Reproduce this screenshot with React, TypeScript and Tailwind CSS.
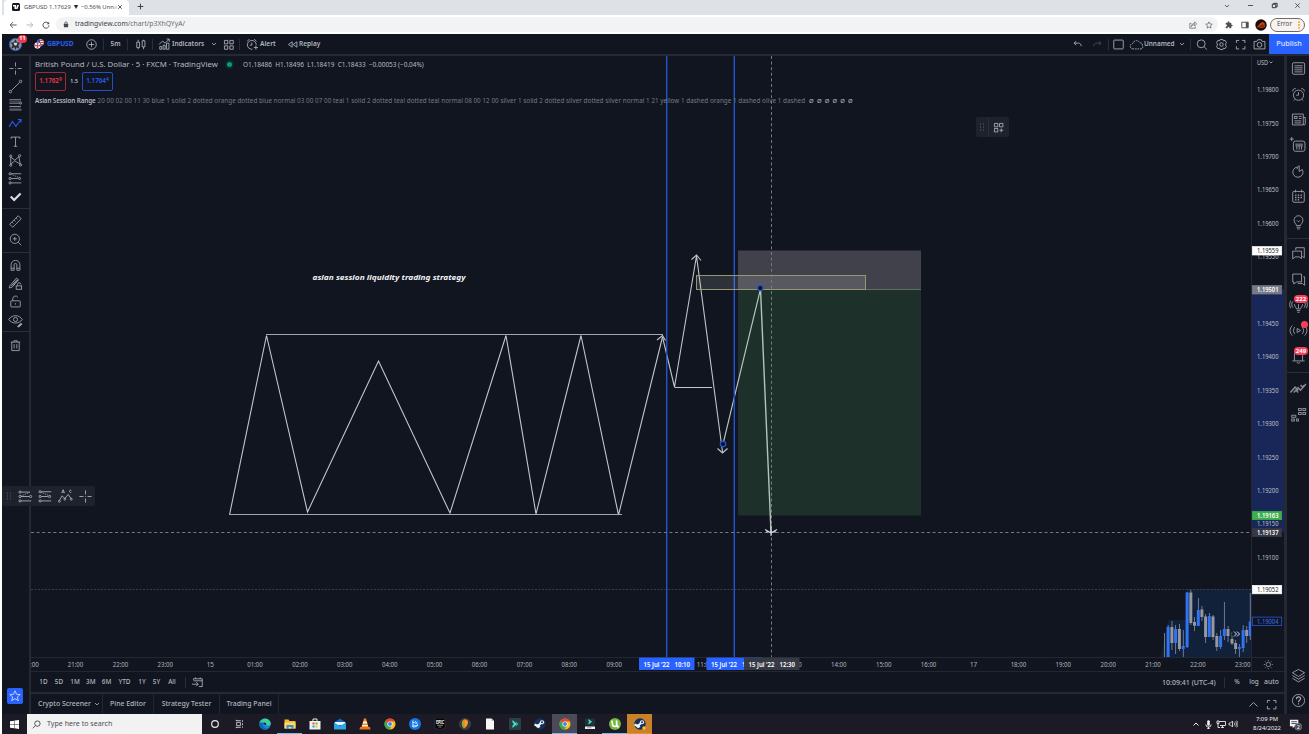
import React from "react";

type P = { children?: React.ReactNode; className?: string };

const Ico = ({ children, className = "" }: P) => (
  <svg
    viewBox="0 0 28 28"
    className={`h-[19px] w-[19px] shrink-0 ${className}`}
    fill="none"
    stroke="currentColor"
    strokeWidth="1.25"
  >
    {children}
  </svg>
);

const Cell = ({ children, className = "" }: P) => (
  <div className={`flex h-full shrink-0 items-center justify-center ${className}`}>{children}</div>
);

const VSep = () => <div className="h-[11px] w-px shrink-0 bg-[#2a2e39]" />;
const HSep = () => <div className="h-px w-full shrink-0 bg-[#2a2e39]" />;

const Chevron = () => (
  <svg viewBox="0 0 6 4" className="h-[4px] w-[6px] shrink-0" fill="none" stroke="currentColor" strokeWidth="0.8">
    <path d="M1 1l2 2 2-2" />
  </svg>
);

const expandIcon = <path d="M8 11.500V8h4M16.500 8H20.500v4M20.500 16.500v4h-4M12 20.500H8v-4" />;

function BrowserTabs() {
  return (
    <div className="flex h-[15px] shrink-0 items-center bg-[#dee1e6] text-[6px] text-[#4a4d51]">
      <div className="ml-[2px] flex h-full w-[125px] items-center rounded-t-[4px] bg-white pl-[8px]">
        <svg viewBox="0 0 16 16" className="mb-[1px] h-[8px] w-[8px] shrink-0">
          <rect width="16" height="16" rx="3" fill="#131722" />
          <path d="M2 4h6v8H5V7H2zM10 4h4l-3 8H8z" fill="#fff" />
        </svg>
        <span className="mb-[2px] ml-[4px] w-[90px] whitespace-nowrap text-[5.900px] leading-[10px]">
          GBPUSD 1.17629 <span className="text-[7px] leading-none text-[#222]">▼</span> −0.56% Unn<span className="text-[#c5c7ca]">a</span>
        </span>
        <svg viewBox="0 0 10 10" className="mb-[1px] ml-[3px] h-[6px] w-[6px] shrink-0" stroke="#3c4043" strokeWidth="1.400">
          <path d="M2 2l6 6M8 2l-6 6" />
        </svg>
      </div>
      <svg viewBox="0 0 10 10" className="mb-[2px] ml-[8px] h-[7px] w-[7px]" stroke="#3c4043" strokeWidth="1.400">
        <path d="M5 1v8M1 5h8" />
      </svg>
      <div className="ml-auto mb-[4px] flex h-[10px] items-center text-[#3c4043]">
        <Cell className="w-[24px]"><Chevron /></Cell>
        <Cell className="w-[23px]"><div className="h-px w-[5px] bg-[#55585c]" /></Cell>
        <Cell className="w-[24px]">
          <svg viewBox="0 0 8 8" className="h-[7px] w-[7px]" fill="none" stroke="#222" strokeWidth="1">
            <path d="M1.500 2.500h4v4h-4zM3 2.500v-1h4v4H5.500" />
          </svg>
        </Cell>
        <Cell className="w-[23px]">
          <svg viewBox="0 0 8 8" className="h-[7px] w-[7px]" stroke="#333" strokeWidth=".9"><path d="M1.500 1.500l5 5M6.500 1.500l-5 5" /></svg>
        </Cell>
      </div>
    </div>
  );
}

function AddressBar() {
  return (
    <div className="flex h-[19px] shrink-0 items-center bg-white text-[#55585c]">
      <Cell className="w-[21px] justify-center">
        <svg viewBox="0 0 10 10" className="h-[8px] w-[8px]" fill="none" stroke="#46494d" strokeWidth="1.100"><path d="M9.500 5h-8M5 1.500L1.500 5 5 8.500" /></svg>
      </Cell>
      <Cell className="w-[13px]">
        <svg viewBox="0 0 10 10" className="h-[8px] w-[8px]" fill="none" stroke="#aeb0b4" strokeWidth="1.100"><path d="M.5 5h8M5 1.500L8.500 5 5 8.500" /></svg>
      </Cell>
      <Cell className="w-[20px]">
        <svg viewBox="0 0 10 10" className="h-[8px] w-[8px]" fill="none" stroke="#46494d" strokeWidth="1.200"><path d="M8.300 3.300A3.800 3.800 0 1 0 8.800 5.500" /><path d="M9 .8v3.200H5.800z" fill="#46494d" stroke="none" /></svg>
      </Cell>
      <div className="flex h-[15px] w-[1162px] items-center rounded-full bg-[#f1f3f4] pl-[7px] pr-[1px]">
        <svg viewBox="0 0 8 10" className="h-[7px] w-[6px]"><rect x="1" y="4" width="6" height="5" rx=".6" fill="#46494d" /><path d="M2.300 4.500V3a1.700 1.700 0 0 1 3.400 0v1.500" fill="none" stroke="#46494d" /></svg>
        <span className="ml-[6px] text-[6.800px] text-[#3c4043]">
          tradingview.com<span className="text-[#6b6e73]">/chart/p3XhQYyA/</span>
        </span>
        <div className="ml-auto flex items-center">
          <Cell className="w-[17px]">
            <svg viewBox="0 0 10 10" className="h-[8px] w-[8px]" fill="none" stroke="#5f6368" strokeWidth=".9"><path d="M3 3H1v6h7V7M3 7c0-3 2-4 4-4V1l2.500 2.700L7 6.200V4.500C5 4.500 4 5.500 3 7z" /></svg>
          </Cell>
          <Cell className="w-[16px]">
            <svg viewBox="0 0 10 10" className="h-[8px] w-[8px]" fill="none" stroke="#5f6368" strokeWidth=".9"><path d="M5 1l1.200 2.700 2.900.3-2.200 2 .6 2.900L5 7.400 2.500 8.900l.6-2.900-2.200-2 2.900-.3z" /></svg>
          </Cell>
        </div>
      </div>
      <Cell className="ml-[3px] w-[15px]">
        <svg viewBox="0 0 24 24" className="h-[8px] w-[8px]" fill="#4d5054"><path d="M20.500 11H19V7a2 2 0 0 0-2-2h-4V3.500a2.500 2.500 0 0 0-5 0V5H4a2 2 0 0 0-2 2v3.800h1.500a2.700 2.700 0 0 1 0 5.400H2V20a2 2 0 0 0 2 2h3.800v-1.500a2.700 2.700 0 0 1 5.400 0V22H17a2 2 0 0 0 2-2v-4h1.500a2.500 2.500 0 0 0 0-5z" /></svg>
      </Cell>
      <Cell className="w-[17px]">
        <svg viewBox="0 0 10 10" className="h-[8px] w-[8px]"><path d="M1 1.500h8v7H1z" fill="none" stroke="#4d5054" strokeWidth="1.200" /><path d="M6 1.500h3v7H6z" fill="#4d5054" /></svg>
      </Cell>
      <Cell className="w-[16px]">
        <svg viewBox="0 0 12 12" className="h-[12px] w-[12px]"><circle cx="6" cy="6" r="5.700" fill="#1c0d09" /><path d="M1.500 8c2-1 3-4 6-5l2 1 .5 4-3 1z" fill="#c8431a" /><path d="M3 8l5-3 1 3z" fill="#7c2410" /></svg>
      </Cell>
      <div className="ml-[1px] flex h-[14px] w-[35px] shrink-0 items-center justify-center rounded-full border border-[#6f6a6a] bg-[#f8f3f0] text-[6.300px] text-[#4a4d51]">
        <span className="ml-[2px]">Error</span>
        <svg viewBox="0 0 2 8" className="ml-[6px] h-[8px] w-[2px]" fill="#f29900"><circle cx="1" cy="1.200" r=".9" /><circle cx="1" cy="4" r=".9" /><circle cx="1" cy="6.800" r=".9" /></svg>
      </div>
    </div>
  );
}

function TopToolbar() {
  return (
    <div className="flex h-[20px] shrink-0 items-center bg-[#11151f] text-[6.600px] text-[#b2b5be]">
      <Cell className="relative w-[28px]">
        <svg viewBox="0 0 16 16" className="mr-[2px] h-[15px] w-[15px]">
          <circle cx="8" cy="8" r="6.600" fill="#8b8f96" stroke="#2450d8" strokeWidth="1" />
          <path d="M8 2.500l1.500 3 3.500.5-2 2.500 1 4-3-1.500L8 14l-1-3-3.500 1.200L5 8.500 3 6l3.500-.5z" fill="#2a2d35" />
          <path d="M6 6h4l-1 3H7z" fill="#d8dade" />
        </svg>
        <span className="absolute left-[16px] top-[1px] flex h-[8px] w-[9px] items-center justify-center rounded-full bg-[#f23645] text-[5.500px] font-bold text-white">11</span>
      </Cell>
      <Cell className="w-[17px]">
        <svg viewBox="0 0 20 20" className="h-[10px] w-[10px]">
          <clipPath id="fl1"><circle cx="13" cy="7" r="6.500" /></clipPath>
          <g clipPath="url(#fl1)"><rect width="20" height="20" fill="#e9eef8" /><path d="M6 2h14v2H6zM6 6h14v2H6zM6 10h14v2H6z" fill="#e0414e" /><path d="M6 0h6v7H6z" fill="#2459c9" /></g>
          <circle cx="7" cy="13" r="7" fill="#11151f" />
          <clipPath id="fl2"><circle cx="7" cy="13" r="6.300" /></clipPath>
          <g clipPath="url(#fl2)"><rect y="6" width="14" height="14" fill="#2f6be0" /><path d="M0 6l14 14M14 6L0 20" stroke="#fff" strokeWidth="2.500" /><path d="M7 6v14M0 13h14" stroke="#fff" strokeWidth="4.500" /><path d="M7 6v14M0 13h14" stroke="#e0414e" strokeWidth="2.500" /></g>
        </svg>
      </Cell>
      <span className="w-[34px] shrink-0 text-[6.700px] font-bold tracking-[-0.1px] text-[#2a5cf5]">GBPUSD</span>
      <Cell className="w-[20px]"><Ico><circle cx="14" cy="14" r="7" /><path d="M14 10v8M10 14h8" /></Ico></Cell>
      <Cell className="ml-[2px]"><VSep /></Cell>
      <Cell className="w-[23px] font-semibold">5m</Cell>
      <VSep />
      <Cell className="w-[24px]"><Ico><path d="M8.500 10.500h4v8h-4zM10.500 10.500V7M10.500 18.500V21M16.500 8.500h4v9h-4zM18.500 17.500v3.500M18.500 8.500V7" /></Ico></Cell>
      <VSep />
      <Cell className="ml-[2px] w-[19px]"><Ico><path d="M7 21v-4h3v4zM12 21v-6h3v6zM17 21v-9h3.500v9zM6 14l5-5 4 3 6-6M17 6h4v4" /></Ico></Cell>
      <span className="ml-[-2px] w-[33px] shrink-0 text-[6.500px] font-semibold">Indicators</span>
      <Cell className="ml-[3px] w-[12px]"><Chevron /></Cell>
      <Cell className="ml-[-1px] w-[19px]"><Ico><path d="M8 8h5v5H8zM16 8h5v5h-5zM8 16h5v5H8zM16 16h5v5h-5z" /></Ico></Cell>
      <Cell className="ml-[1px]"><VSep /></Cell>
      <Cell className="ml-[3px] w-[19px]"><Ico><circle cx="13" cy="14.500" r="6.500" strokeDasharray="31 10" strokeDashoffset="-9" /><path d="M13 11v4h-3M6 9.500L9.500 6M16.500 6l3.500 3.500M19 15.500v6M16 18.500h6" /></Ico></Cell>
      <span className="ml-[-2px] w-[24px] shrink-0 font-semibold">Alert</span>
      <Cell className="ml-[1px] w-[14px]"><Ico><path d="M13.500 10v8L8 14zM20.500 10v8L15 14z" strokeLinejoin="round" /></Ico></Cell>
      <span className="shrink-0 text-[6.500px] font-semibold">Replay</span>
      <div className="ml-auto flex h-full items-center">
        <Cell className="w-[19px]"><Ico><path d="M12 9l-3 3 3 3M9 12h6c3 0 4.500 1.500 4.500 4.500" /></Ico></Cell>
        <Cell className="w-[20px] text-[#4a4e59]"><Ico><path d="M16 9l3 3-3 3M19 12h-6c-3 0-4.500 1.500-4.500 4.500" /></Ico></Cell>
        <Cell className="ml-[1px]"><VSep /></Cell>
        <Cell className="w-[19px]"><Ico><rect x="7" y="7.500" width="14" height="13" rx="1" /></Ico></Cell>
        <Cell className="w-[16px]">
          <Ico><path strokeDasharray="2.500 1.200" d="M9 20.500a4 4 0 0 1-.5-8c1-4.500 8-6 10.500-1 3.500 0 4.500 3 3.500 4.500 1.500 2 .500 4.500-2.500 4.500z" /></Ico>
        </Cell>
        <span className="w-[32px] shrink-0 text-[6.400px] font-semibold">Unnamed</span>
        <Cell className="w-[12px]"><Chevron /></Cell>
        <Cell className="ml-[2px]"><VSep /></Cell>
        <Cell className="ml-[1px] w-[19px]"><Ico><circle cx="13.500" cy="13" r="5.800" /><path d="M18 17.500l4 4" /></Ico></Cell>
        <Cell className="w-[20px]"><Ico><circle cx="14" cy="14" r="2.600" /><path d="M12 6.500h4l.8 2.200 2.400-.9 2 3-1 2v2.400l1 2-2 3-2.400-.9L16 21.500h-4l-.8-2.200-2.400.9-2-3 1-2v-2.400l-1-2 2-3 2.400.9z" strokeLinejoin="round" /></Ico></Cell>
        <Cell className="w-[19px]"><Ico>{expandIcon}</Ico></Cell>
        <Cell className="w-[19px]"><Ico><path d="M6 9.500H10L11.500 7h5l1.500 2.500h4v11H6z" strokeLinejoin="round" /><circle cx="14" cy="14.500" r="3.500" /></Ico></Cell>
        <div className="flex h-full w-[40px] items-center justify-center bg-[#2962ff] text-[7.300px] font-medium text-[#dde6ff]">Publish</div>
      </div>
    </div>
  );
}

const fibTool = (
  <g><path d="M7.500 7h15M7.500 14h10M7.500 20.500h15" /><path d="M8 8l12 5" strokeDasharray="1.500 1.500" /><circle cx="6" cy="7" r="1.600" /><circle cx="6" cy="14" r="1.600" /><circle cx="6" cy="20.500" r="1.600" /><circle cx="20" cy="14" r="1.600" /></g>
);
const crossTool = <path d="M14 5v6M14 17v6M5 14h6M17 14h6M13.500 14h1" />;

const leftIcons: React.ReactNode[] = [
  crossTool,
  <g><path d="M8 20L20 8" /><circle cx="6.500" cy="21.500" r="1.800" /><circle cx="21.500" cy="6.500" r="1.800" /></g>,
  <g><path d="M5 7h17M5 12h15M5 17h17M5 22h18" /><circle cx="21.500" cy="12" r="1.500" /><path d="M5 9.500h17M5 19.500h17" opacity=".4" /></g>,
  <path d="M4.500 19l5-8 5 7 7-9M17.500 8H22v4.500M14 18l1.500 1" strokeWidth="1.600" />,
  <path d="M7.500 10V7.500h13V10M14 7.500v13.500M11.500 21h5" />,
  <g><path d="M7 19.500V9l6 4.500 6-5 2 11-8-5z" /><circle cx="7" cy="21" r="1.600" /><circle cx="7" cy="7.500" r="1.600" /><circle cx="20" cy="7" r="1.600" /><circle cx="21.500" cy="20.500" r="1.600" /></g>,
  fibTool,
  <path d="M7 14l5 5 9.500-9.500" stroke="#dcdee3" strokeWidth="3.200" />,
];
const measure: React.ReactNode[] = [
  <path d="M5.500 18L18 5.500l4.500 4.500L10 22.500zM9 15l2 2M12 12l2 2M15 9l2 2" />,
  <g><circle cx="13" cy="13" r="6.800" /><path d="M18 18l4.500 4.500M13 10v6M10 13h6" /></g>,
];
const locks: React.ReactNode[] = [
  <path d="M7.500 21V13a6.500 6.500 0 0 1 13 0v8h-4.500v-8a2 2 0 0 0-4 0v8zM7.500 18h4.500M16 18h4.500" />,
  <g><path d="M5 18L15.500 6l3 2.500L9 19.500 5 20.500zM7.500 18l9-10M10.500 17l7-8M17 17V15.500a2.500 2.500 0 0 1 5 0" /><rect x="15" y="17.500" width="8" height="5" /></g>,
  <g><rect x="7" y="13" width="14" height="9" rx="1" /><path d="M10 13v-3a4 4 0 0 1 7.500-2M14 16.500v2" /></g>,
  <g><path d="M4 12.500c5-7.500 15-7.500 20 0-5 7-15 7-20 0z" /><circle cx="14" cy="12.500" r="3" /><path d="M17 23l5-5 1.500 1.500-4.500 4z" fill="currentColor" /></g>,
];

function LeftToolbar() {
  const Box = ({ children, className = "" }: P) => (
    <div className={`flex shrink-0 items-center justify-center ${className}`}>{children}</div>
  );
  return (
    <div className="flex w-[27px] shrink-0 flex-col bg-[#11151f] pt-[3px] text-[#a6a9b2]">
      {leftIcons.map((d, i) => (
        <Box key={i} className={i === 3 ? "h-[18.400px] text-[#2a5cf5]" : "h-[18.400px]"}><Ico>{d}</Ico></Box>
      ))}
      <div className="mt-[2px]"><HSep /></div>
      <div className="pt-[3px]">{measure.map((d, i) => <Box key={i} className="h-[18.400px]"><Ico>{d}</Ico></Box>)}</div>
      <div className="mt-[3px]"><HSep /></div>
      <div className="pt-[3px]">{locks.map((d, i) => <Box key={i} className="h-[18.400px]"><Ico>{d}</Ico></Box>)}</div>
      <div className="mt-[2px]"><HSep /></div>
      <Box className="mt-[4px] h-[18px]"><Ico><path d="M7 9h14M11.500 9V7h5v2M8.500 9v12.500h11V9M12 12v6.500M16 12v6.500" /></Ico></Box>
      <div className="mb-[10px] ml-[5px] mt-auto flex h-[16px] w-[16px] items-center justify-center rounded-[2px] bg-[#2962ff] text-[#cfdcff]">
        <svg viewBox="0 0 16 16" className="h-[14px] w-[14px]" fill="none" stroke="currentColor"><path d="M8 2l1.700 4 4.300.3-3.300 2.800 1.100 4.200L8 11l-3.800 2.300 1.100-4.200L2 6.300 6.300 6z" /></svg>
      </div>
    </div>
  );
}

const rightTop: React.ReactNode[] = [
  <g><rect x="5" y="5.500" width="18" height="17" rx="2" /><path d="M8 10h12M8 13h12M8 16h12M8 19h12" /></g>,
  <g><circle cx="14" cy="15" r="7.500" /><path d="M14 10.500V15h-3.500M5.500 9.500a3.500 3.500 0 0 1 4.500-4M22.500 9.500a3.500 3.500 0 0 0-4.500-4M9 21l-2 2M19 21l2 2" /></g>,
  <g><path d="M5 6h16v16H5zM21 11h3v9.500c0 2-3 2-3 0M8 16h10M8 19h10M14.500 9.500h4M14.500 12.500h4M8 9.500h4v3H8z" /></g>,
  <g><rect x="6.500" y="7.500" width="17" height="15" rx="3" /><path d="M9.500 12h11M9.500 14.500h11M11.500 15v5M15 15v5M18.500 15v5" /><path d="M4 1.500v6M1 4.500h6" stroke="#11151f" strokeWidth="4" /><path d="M4 1.500v6M1 4.500h6" /></g>,
  <path d="M12 7.500A7.500 7.500 0 1 0 19.500 11l-4.500 3V5.500c-1.500.5-3 2-3 5" />,
  <g><rect x="5.500" y="6.500" width="17" height="16" rx="2" /><path d="M9.500 4v4M18.500 4v4" /><path d="M9 12h10M9 15.500h10M9 19h8" strokeDasharray="2 2" strokeWidth="2" /></g>,
  <path d="M11 18.500c0-2.500-3.500-3.500-3.500-8a6.500 6.500 0 0 1 13 0c0 4.500-3.500 5.500-3.500 8zM11 21h6M12 23.500h4M12 11l2 2 2-2" />,
];
const rightMid: React.ReactNode[] = [
  <path d="M10 9V5.500h12.500v15l-3-2.500M5.500 10.500h13v11l-3.500-2.500H9L5.500 22z" strokeLinejoin="round" />,
  <path d="M5.500 6h13v11.500h-7l-4.500 3v-3H5.500zM21 10h2v12.500l-3-2.500h-7" strokeLinejoin="round" />,
  <path d="M11 19c0-2-3-3-3-7M20 12c0 4-3 5-3 7h-6M11.500 21.500h5M12.500 24h3M5.500 8c-2 3-2 6 0 9M2.500 7c-2 3-2 8 0 11M22.500 8c2 3 2 6 0 9M25.500 7c2 3 2 8 0 11M14 12v6" />,
  <path d="M12 11v6l5-3zM8.500 9c-2.500 3-2.500 7 0 10M5 6.500c-4.500 4.500-4.500 10.500 0 15M19.500 9c2.500 3 2.500 7 0 10M23 6.500c4.500 4.500 4.500 10.500 0 15" />,
  <path d="M5 20.500h18M8 20v-8a6 6 0 0 1 12 0v8M12 22.500c0 2 4 2 4 0" />,
];
const badges = ["", "", "222", "•", "249"];
const rightLow: React.ReactNode[] = [
  <path d="M2 20l7-8 4.500 4.500M7 20l3-3.500M12.500 12l4.500 4.500 8-9M17 9l3 3 2-2.500M13.500 20l-4-4.500" strokeWidth="2.200" stroke="#868993" />,
  <path d="M14 5h4v3h-4zM20.500 5h4v3h-4zM14 11h4v3h-4zM20.500 11h4v3h-4zM4 15h6v3H4zM4 20.500h4v3H4zM11 20.500h3v3h-3z" strokeWidth="1.500" stroke="#868993" />,
];

function RightBar() {
  return (
    <div className="flex w-[22px] shrink-0 flex-col bg-[#11151f] text-[#a6a9b2]">
      {rightTop.map((d, i) => (
        <div key={i} className="flex h-[25.600px] shrink-0 items-center justify-center"><Ico>{d}</Ico></div>
      ))}
      <div className="mt-[3px]"><HSep /></div>
      <div className="pt-[2px]">
        {rightMid.map((d, i) => (
          <div key={i} className="relative flex h-[25.600px] items-center justify-center">
            <Ico>{d}</Ico>
            {badges[i] === "•" ? (
              <span className="absolute right-[1px] top-[3px] h-[7px] w-[7px] rounded-full bg-[#f7405c]" />
            ) : badges[i] ? (
              <span className="absolute right-[1px] top-[3px] flex h-[8px] w-[14px] items-center justify-center rounded-full bg-[#f7405c] text-[6px] font-bold text-white">{badges[i]}</span>
            ) : null}
          </div>
        ))}
      </div>
      <div className="mt-[3px]"><HSep /></div>
      <div className="pt-[3px]">
        {rightLow.map((d, i) => (
          <div key={i} className="flex h-[25.600px] items-center justify-center"><Ico>{d}</Ico></div>
        ))}
      </div>
      <div className="mt-auto flex h-[26px] items-center justify-center">
        <Ico><path d="M5 10l9-5 9 5-9 5.500zM5 14l9 5.500 9-5.500M5 18l9 5.500 9-5.500" strokeLinejoin="round" /></Ico>
      </div>
      <div className="mb-[1px] flex h-[25px] items-center justify-center">
        <Ico><circle cx="14" cy="14" r="9" /><path d="M11 12c0-4.500 6-4 6-.5 0 2.500-3 2-3 5M14 18v2" strokeWidth="1.700" /></Ico>
      </div>
    </div>
  );
}

// x, wick top, wick bottom, body top, body bottom, rising
const candles: [number, number, number, number, number, boolean][] = [
  [1164.5, 633, 657, 645, 645, false],
  [1168.1, 625, 657, 627, 657, true],
  [1171.9, 621, 650, 627, 643, false],
  [1175.6, 625, 654, 629, 643, true],
  [1179.4, 624, 651, 629, 649, false],
  [1183.2, 630, 657, 646, 649, true],
  [1187.1, 592, 648, 592.5, 647, true],
  [1190.8, 590, 625, 592.5, 623, false],
  [1194.5, 617, 631, 622, 625.7, false],
  [1198.3, 598, 626, 610, 626, true],
  [1201.9, 606, 621, 609.5, 617, false],
  [1205.6, 614, 643, 616.5, 637, false],
  [1209.3, 613, 637, 616, 637, true],
  [1213, 615, 640, 616.5, 637, false],
  [1216.8, 633, 651, 636, 647, false],
  [1220.6, 630, 649, 636, 647, true],
  [1224.3, 602, 640, 629, 636, true],
  [1228, 626, 642, 629, 636, false],
  [1232, 632, 645, 639, 643.5, false],
  [1235.6, 640, 654, 643, 649, false],
  [1239.3, 644, 657, 647, 649, true],
  [1243.1, 625, 652, 630, 648, true],
  [1246.7, 626, 643, 630, 636, false],
  [1250.2, 593, 640, 621.5, 636, true],
];

function Chart() {
  return (
    <svg viewBox="31 56 1220 601" className="block h-[601px] w-[1220px]" fill="none" stroke="#c3c5ca" strokeWidth="1.100">
      <path d="M1161 657L1168 620H1187V589H1251V657z" fill="#12213a" stroke="none" />
      <path d="M31 589.500H1251" stroke="#3c3f49" strokeWidth="1" strokeDasharray="2 1.500" />
      {candles.map(([x, wt, wb, t, b, up], i) => (
        <g key={i} stroke="none">
          <rect x={x - 0.35} y={wt} width="0.8" height={wb - wt} fill={up ? "#7f8fb5" : "#8b8e96"} />
          <rect x={x - 1.5} y={t} width="3" height={b - t} fill={up ? "#2f74f5" : "#9598a1"} />
        </g>
      ))}
      <circle cx="1236.500" cy="634" r="4.500" fill="#12213a" stroke="none" />
      <path d="M1234 631.500l2.500 2.500-2.500 2.500M1237 631.500l2.500 2.500-2.500 2.500" stroke="#e0e2e7" strokeWidth="1" />
      <rect x="738" y="250.500" width="183" height="39.500" fill="#41414b" stroke="none" />
      <rect x="738" y="290" width="183" height="225.500" fill="#1e302a" stroke="none" />
      <path d="M738 289.500H921" stroke="#5c6f5e" strokeWidth="1" />
      <path d="M229.500 515L266.500 335.500L307.500 512L378.500 361L450 513L506 335.500L536 514L581 335.500L618.500 515L662.500 337" />
      <path d="M266 334.500H663M229 514.500H622" strokeWidth="1" stroke="#a4a6ad" />
      <path d="M657 340L662.500 335.500L665.500 340.500" />
      <path d="M662.500 337L674.500 387L696.500 256L722.500 452" />
      <path d="M691.500 259.500L696.500 255L701 260.500" />
      <path d="M674.500 387.500H712" strokeWidth="1" />
      <path d="M717.500 448.500L722.500 453L727.500 448.500" />
      <path d="M723 444L760.500 289" stroke="#bcc8c2" />
      <path d="M760.500 289L771 532" stroke="#b4c4ba" strokeWidth="1.400" />
      <path d="M666.700 56V657M734.300 56V657" stroke="#2354d2" strokeWidth="1.400" />
      <rect x="696.500" y="275.500" width="169" height="14" fill="#ffffff" fillOpacity=".12" stroke="#96966f" strokeWidth="1" />
      <path d="M31 532.500H1251M771.500 56V657" stroke="#757983" strokeWidth="1" strokeDasharray="3 2.600" />
      <path d="M765 529.500L771 533L777 529.500M771 526V536M766 532H776" stroke="#d4d7dc" />
      <circle cx="723" cy="444" r="2.700" fill="#10131c" stroke="#2354d2" strokeWidth="1.200" />
      <circle cx="760.300" cy="288" r="2.700" fill="#10131c" stroke="#2354d2" strokeWidth="1.200" />
      <text x="312.500" y="280" fill="#f2f3f5" stroke="none" fontSize="7.400" fontWeight="700" fontStyle="italic" textLength="153" lengthAdjust="spacingAndGlyphs">asian session liquidity trading strategy</text>
    </svg>
  );
}

function Legend() {
  return (
    <div className="absolute left-[4px] top-[3px] whitespace-nowrap text-[#b6b9c1]">
      <div className="flex h-[11px] items-center">
        <span className="w-[183px] text-[7.800px]">British Pound / U.S. Dollar · 5 · FXCM · TradingView</span>
        <span className="ml-[7px] flex h-[9px] w-[9px] items-center justify-center rounded-full bg-[#0c2a2c]"><span className="h-[5px] w-[5px] rounded-full bg-[#089981]" /></span>
        <span className="ml-[9px] mt-[2px] text-[6.500px] tracking-[-0.030px]">O1.18486&nbsp; H1.18496&nbsp; L1.18419&nbsp; C1.18433&nbsp; −0.00053 (−0.04%)</span>
      </div>
      <div className="mt-[2px] flex h-[19px] items-center text-[6.300px] font-semibold">
        <span className="flex h-full w-[31px] items-center justify-center rounded-[2px] border border-[#9c2a3a] text-[#f23645]">1.1762<sup className="text-[5px]">9</sup></span>
        <span className="w-[16px] text-center text-[5.800px]">1.5</span>
        <span className="flex h-full w-[31px] items-center justify-center rounded-[2px] border border-[#2350c8] text-[#2a5cf5]">1.1764<sup className="text-[5px]">4</sup></span>
      </div>
      <div className="mt-[4px] flex h-[12px] items-center text-[6.300px] leading-[12px] tracking-[0.044px] text-[#787b86]">
        <span className="mr-[2px] tracking-[-0.100px] font-semibold text-[#b6b9c1]">Asian Session Range</span>
        <span>20 00 02 00 11 30 blue 1 solid 2 dotted orange dotted blue normal 03 00 07 00 teal 1 solid 2 dotted teal dotted teal normal 08 00 12 00 silver 1 solid 2 dotted silver dotted silver normal 1 21 yellow 1 dashed orange 1 dashed olive 1 dashed</span>
        <span className="ml-[4px] text-[6px] tracking-[0] text-[#b6b9c1]">Ø&nbsp; Ø&nbsp; Ø&nbsp; Ø&nbsp; Ø&nbsp; Ø</span>
      </div>
    </div>
  );
}

const Dots = () => (
  <svg viewBox="0 0 6 8" className="h-[8px] w-[6px]" fill="#5a5e69">
    {[1, 4].map((x) => [0.5, 3.5, 6.5].map((y) => <rect key={`${x}${y}`} x={x} y={y} width="1" height="1" />))}
  </svg>
);

const ticks: [string, number][] = [
  ["1.19800", 90], ["1.19750", 123.3], ["1.19700", 156.7], ["1.19650", 190], ["1.19600", 223.4], ["1.19550", 257],
  ["1.19450", 323.5], ["1.19400", 357], ["1.19350", 390.4], ["1.19300", 423.7], ["1.19250", 457.3], ["1.19200", 490.7],
  ["1.19150", 524], ["1.19100", 557.2],
];
const marks: [string, number, string, string, string][] = [
  ["1.19559", 250.8, "#ffffff", "#ffffff", "#1b1e27"],
  ["1.19501", 289.8, "#787b86", "#787b86", "#ffffff"],
  ["1.19163", 515.5, "#3fae4c", "#3fae4c", "#ffffff"],
  ["1.19137", 532.5, "#363a45", "#363a45", "#ffffff"],
  ["1.19052", 589.6, "#ffffff", "#ffffff", "#1b1e27"],
  ["1.19004", 621.3, "#11151f", "#2a62f0", "#3a72ff"],
];

function PriceAxis() {
  return (
    <svg viewBox="1251 56 33 601" className="block h-[601px] w-[33px] text-[6.400px]" fill="#bdc0c8">
      <path d="M1251.500 56V657" stroke="#232732" />
      <rect x="1252" y="289" width="32" height="243" fill="#182758" />
      <text x="1257" y="64.500" textLength="11" lengthAdjust="spacingAndGlyphs">USD</text>
      <path d="M1269.500 61.500l1.500 1.500 1.500-1.500" fill="none" stroke="#b2b5be" strokeWidth=".8" />
      {ticks.map(([t, y]) => (
        <text key={t} x="1257" y={y + 2.3} textLength="21.500" lengthAdjust="spacingAndGlyphs">{t}</text>
      ))}
      {marks.map(([t, y, bg, bd, fg]) => (
        <g key={t}>
          <rect x="1252.300" y={y - 4.2} width="29.400" height="8.400" fill={bg} stroke={bd} strokeWidth=".7" />
          <text x="1257" y={y + 2.3} fill={fg} fontWeight={fg === "#ffffff" ? 600 : 400} textLength="21.500" lengthAdjust="spacingAndGlyphs">{t}</text>
        </g>
      ))}
    </svg>
  );
}

const hours: [string, number][] = [
  [":00", 34.5], ["21:00", 75.5], ["22:00", 120.5], ["23:00", 165.3], ["15", 210.3], ["01:00", 255], ["02:00", 300], ["03:00", 344.8],
  ["04:00", 389.8], ["05:00", 434.6], ["06:00", 479.5], ["07:00", 524.4], ["08:00", 569.3], ["09:00", 614.2], ["11:00", 704.5],
  ["13:00", 794], ["14:00", 838.8], ["15:00", 883.7], ["16:00", 928.6], ["17", 973.5], ["18:00", 1018.4], ["19:00", 1063.3],
  ["20:00", 1108.2], ["21:00", 1153], ["22:00", 1198], ["23:00", 1242.8],
];

function TimeAxis() {
  const stamp = (x: number, time: string, bg: string) => (
    <g fill="#fff" fontWeight="600">
      <rect x={x} y="657.500" width="55.500" height="12.500" fill={bg} />
      <text x={x + 4.5} y="666.800" textLength="26" lengthAdjust="spacingAndGlyphs">15 Jul '22</text>
      <text x={x + 35.5} y="666.800" textLength="15.500" lengthAdjust="spacingAndGlyphs">{time}</text>
    </g>
  );
  return (
    <svg viewBox="31 657 1253 14" className="block h-[14px] w-[1253px] shrink-0 bg-[#11151f] text-[6.300px]" fill="#b2b5be">
      <path d="M31 657.500H1284M1251.500 657V671" stroke="#232732" />
      {hours.map(([t, x], i) => (
        <text key={i} x={x} y="666.700" textAnchor="middle" textLength={t.length > 3 ? 15.5 : undefined} lengthAdjust="spacingAndGlyphs">{t}</text>
      ))}
      {stamp(639, "10:10", "#2962ff")}
      {stamp(706.5, "12:00", "#2962ff")}
      {stamp(744, "12:30", "#363a45")}
      <g fill="none" stroke="#a6a9b2" strokeWidth=".7"><circle cx="1268.300" cy="664.500" r="2.200" /><path d="M1268.300 660v1.200M1268.300 668v1.200M1263.800 664.500h1.200M1271.700 664.500h1.200M1265.100 661.300l.8.8M1270.700 666.900l.8.8M1265.100 667.700l.8-.8M1270.700 662.100l.8-.8" /></g>
    </svg>
  );
}

function RangeBar() {
  const r: [string, string][] = [["1D", "w-[15px]"], ["5D", "w-[16px]"], ["1M", "w-[16px]"], ["3M", "w-[15.500px]"], ["6M", "w-[16px]"], ["YTD", "w-[20px]"], ["1Y", "w-[15px]"], ["5Y", "w-[14px]"], ["All", "w-[17px]"]];
  return (
    <div className="flex h-[21px] shrink-0 items-center border-t border-[#232732] bg-[#11151f] pl-[5px] text-[6.400px] font-medium text-[#b2b5be]">
      {r.map(([t, w]) => <Cell key={t} className={`pt-[1px] ${w}`}>{t}</Cell>)}
      <Cell className="ml-[4px]"><VSep /></Cell>
      <Cell className="ml-[2px] w-[20px]"><Ico><path d="M8 10V8.500h13V20h-5M8 11.500h13M11 6.500v2M18 6.500v2M6 16.500h9M12 13.500l3 3-3 3" /></Ico></Cell>
      <div className="ml-auto flex h-full items-center pt-[1px]">
        <span className="w-[62px] text-[7px]">10:09:41 (UTC-4)</span>
        <VSep />
        <Cell className="w-[24px]">%</Cell>
        <Cell className="w-[10px]">log</Cell>
        <Cell className="w-[25px] text-[6.800px]">auto</Cell>
      </div>
    </div>
  );
}

function PanelTabs() {
  return (
    <div className="flex h-[20px] shrink-0 items-center bg-[#11151f] text-[6.900px] font-medium text-[#b2b5be]">
      <Cell className="w-[72px] border-r border-[#232732]"><span className="ml-[5px] mr-[3px]">Crypto Screener</span><Chevron /></Cell>
      <Cell className="w-[51px] border-r border-[#232732]">Pine Editor</Cell>
      <Cell className="w-[66px] border-r border-[#232732]">Strategy Tester</Cell>
      <Cell className="w-[59px] border-r border-[#232732]">Trading Panel</Cell>
      <div className="ml-auto flex h-full">
        <Cell className="w-[18px]"><Ico><path d="M8 17l6-6 6 6" /></Ico></Cell>
        <Cell className="mr-[3px] w-[19px]"><Ico>{expandIcon}</Ico></Cell>
      </div>
    </div>
  );
}

const Chrome = () => (
  <g>
    <circle cx="12" cy="12" r="11" fill="#fbc116" />
    <path d="M12 12L2.500 6.500A11 11 0 0 1 21.500 6.500L22 7H12z" fill="#ea4335" />
    <path d="M2.500 6.500A11 11 0 0 0 11 23l4.500-8L12 12z" fill="#34a853" />
    <circle cx="12" cy="12" r="5.200" fill="#fff" /><circle cx="12" cy="12" r="4" fill="#4285f4" />
  </g>
);
const Steam = () => (
  <g>
    <circle cx="12" cy="12" r="11.500" fill="#14315c" />
    <path d="M1 13l6 2.500L12 12l3-3.500" fill="none" stroke="#f2f5f8" strokeWidth="4" />
    <circle cx="8.500" cy="16.500" r="3.600" fill="#f2f5f8" />
    <circle cx="16" cy="8.500" r="4.200" fill="#f2f5f8" /><circle cx="16" cy="8.500" r="2" fill="#14315c" />
  </g>
);

const apps: { art: React.ReactNode; cls?: string }[] = [
  { art: <circle cx="12" cy="12" r="8" fill="none" stroke="#e8e8ec" strokeWidth="2.800" /> },
  { art: <path d="M3 4h11M3 20h11M4 8h9v8H4zM18 3v4M18 10v5M18 18v3M3 2v3M3 19v3" fill="none" stroke="#e0e0e6" strokeWidth="1.900" /> },
  { art: <g><circle cx="12" cy="12" r="11.500" fill="#1b84dc" /><path d="M1 9C4-1 21-2 23.500 10c.500 6-6 7-9.500 4 2-3-1-6-5-5-3 0-6 1-8 0z" fill="#3ccf9a" /><path d="M9 11c-3 4 1 10 9 11A11.500 11.500 0 0 1 .500 12c1-4 6.500-4 8.500-1z" fill="#1266b8" /><path d="M14 14c-4-1-5-3-4.500-4 3-1 6 1 4.500 4z" fill="#1b1a25" /></g> },
  { art: <g><path d="M1 3h8l2 3h12v15H1z" fill="#f5b93a" /><path d="M1 9h22v12H1z" fill="#ffd866" /><path d="M5 14h14v8h-4v-4H9v4H5z" fill="#3f8fd8" /></g>, cls: "border-b border-[#76b9ed]" },
  { art: <g><path d="M8 7V2h8v5" fill="none" stroke="#eee" strokeWidth="2" /><path d="M1 6h22v17H1z" fill="#f1f1f3" /><path d="M7 9h4v4H7z" fill="#f25022" /><path d="M13 9h4v4h-4z" fill="#7fba00" /><path d="M7 15h4v4H7z" fill="#00a4ef" /><path d="M13 15h4v4h-4z" fill="#ffb900" /></g> },
  { art: <g><path d="M0 9l12-8 12 8v13H0z" fill="#1267b4" /><path d="M2 8h20v6H2z" fill="#e8f4fb" /><path d="M0 9l12 7 12-7v14H0z" fill="#2fa5e8" /></g> },
  { art: <g><path d="M10 1h4l5 17H5z" fill="#f58a1f" /><path d="M8.500 7h7l1 4h-9zM6.500 14h11l.7 2.500H5.700z" fill="#f4f4f4" /><path d="M2 18h20l1 5H1z" fill="#e87512" /></g> },
  { art: <Chrome /> },
  { art: <g><circle cx="12" cy="12" r="12" fill="#1473e6" /><path d="M8 5v13c8 0 12-4 7-7L7 8M6 16l12-1M12 6l5 4" fill="none" stroke="#d6eaff" strokeWidth="1.900" /></g> },
  { art: <g><path d="M2 0h20v20l-10 4-10-4z" fill="#050506" stroke="#44444a" strokeWidth="1" /><text x="12" y="11" textAnchor="middle" fontSize="9" fontWeight="700" fill="#fff" textLength="16" lengthAdjust="spacingAndGlyphs">EPIC</text><path d="M6 14.500h12M9 18h6" stroke="#aaa" strokeWidth="1.500" /></g> },
  { art: <g><circle cx="12" cy="12" r="11" fill="#35383d" stroke="#5c5f64" /><path d="M6 8c2-6 7-7 11-3 3 5-1 13-7 16-3-3-5-8-4-13z" fill="#f08a1c" /><path d="M7 5l3 15c-4-3-5-8-4-12z" fill="#7cb342" /><path d="M12 5l5 2-5 12z" fill="#f7a83a" /></g> },
  { art: <g><path d="M4 1h11l5 5v17H4z" fill="#f7f7f8" /><path d="M15 1v5h5z" fill="#b8b8bd" /></g> },
  { art: <g><rect x="0" y="0" width="24" height="24" rx="2" fill="#2b3f49" /><path d="M7 4l9 8-9 8v-5l3-3-3-3z" fill="#4fe0c0" /><path d="M14 7l5 5-5 5z" fill="#2fae98" /></g> },
  { art: <Steam /> },
  { art: <Chrome />, cls: "bg-[#4b4a58] border-b border-[#76b9ed]" },
  { art: <g><path d="M2 1h20v14H2z" fill="#1d343c" /><path d="M9 2l7 5.500L9 13V9l2-1.500L9 6z" fill="#4fe0c0" /><path d="M2 17h20v5H2z" fill="#f0f0f2" /><path d="M6 19.500h9" stroke="#555" /></g> },
  { art: <g><circle cx="12" cy="12" r="12" fill="#76b83f" /><path d="M6 5c1 9 1 12 6 12 4 0 4-3 3-12M15.500 14c1 4 2 4 4.500 3" fill="none" stroke="#fff" strokeWidth="3.400" /></g>, cls: "border-b border-[#76b9ed]" },
  { art: <g><Steam /><circle cx="20" cy="20" r="3.500" fill="#ffc02e" /></g>, cls: "bg-[#c9822a] border-b border-[#f08a2a]" },
];

function Taskbar() {
  return (
    <div className="flex h-[20px] shrink-0 items-center bg-[#1b1a25] text-[#ededf1]">
      <Cell className="w-[25px]">
        <svg viewBox="0 0 10 10" className="h-[9px] w-[9px]" fill="#fff"><path d="M0 1.400l4.500-.7v4H0zM5 .6L10 0v4.700H5zM0 5.200h4.500v4L0 8.500zM5 5.200h5V10l-5-.7z" /></svg>
      </Cell>
      <div className="flex h-full w-[175px] items-center bg-[#f2f2f3] pl-[5px] text-[7.100px] text-[#4d4d52]">
        <svg viewBox="0 0 10 10" className="h-[9px] w-[9px]" fill="none" stroke="#333" strokeWidth=".9"><circle cx="6" cy="4" r="3" /><path d="M3.800 6.200L.8 9.200" /></svg>
        <span className="ml-[6px]">Type here to search</span>
      </div>
      {apps.map((a, i) => (
        <Cell key={i} className={`w-[25px] ${a.cls ?? ""}`}>
          <svg viewBox="0 0 24 24" className={i < 2 ? "h-[10px] w-[10px]" : "h-[12px] w-[12px]"}>{a.art}</svg>
        </Cell>
      ))}
      <div className="ml-auto flex h-full items-center">
        <Cell className="w-[13px]"><svg viewBox="0 0 8 8" className="h-[8px] w-[8px]" fill="none" stroke="#eee"><path d="M1.500 5.500L4 3l2.500 2.500" /></svg></Cell>
        <Cell className="w-[12px]"><svg viewBox="0 0 8 10" className="h-[9px] w-[7px]" fill="#f2f2f4"><rect x="2.500" y="0" width="3" height="6.500" rx="1.500" /><path d="M1 5a3 3 0 0 0 6 0M4 7.500V10M2.500 9.500h3" fill="none" stroke="#f2f2f4" /></svg></Cell>
        <Cell className="w-[13px]"><svg viewBox="0 0 10 8" className="h-[8px] w-[10px]" fill="none" stroke="#eee" strokeWidth=".9"><path d="M3 1.500h6.500v4H4M5 7.500h3M6.500 5.500v2M1 1v2.500h2V1zM2 3.500v4h2" /></svg></Cell>
        <Cell className="w-[12px]"><svg viewBox="0 0 10 8" className="h-[8px] w-[10px]" fill="none" stroke="#eee" strokeWidth=".8"><path d="M1 3v2h1.500l2 2V1l-2 2zM6 2.500c.8 1 .8 2 0 3M7.300 1.500c1.500 1.500 1.500 3.500 0 5M8.600.7c2 2 2 4.600 0 6.600" /></svg></Cell>
        <div className="ml-[6px] w-[44px] text-center text-[5.900px] leading-[9px]">7:09 PM<br />8/24/2022</div>
        <Cell className="w-[20px] justify-start">
          <svg viewBox="0 0 14 14" className="h-[13px] w-[13px]">
            <path d="M1 2h9v7H6l-2 2V9H1z" fill="#f4f4f6" /><path d="M2.500 4h6M2.500 6h6" stroke="#1b1a25" strokeWidth=".8" />
            <circle cx="10" cy="9.500" r="3.800" fill="#4a4953" stroke="#aaa" strokeWidth=".5" /><text x="10" y="11.700" fontSize="6" textAnchor="middle" fill="#fff">2</text>
          </svg>
        </Cell>
      </div>
    </div>
  );
}

export default function App() {
  return (
    <div className="flex h-[734px] w-[1309px] flex-col overflow-hidden bg-white pl-[2px] font-['Noto_Sans','Open_Sans',sans-serif] leading-none">
      <BrowserTabs />
      <AddressBar />
      <TopToolbar />
      <div className="relative flex h-[660px] shrink-0 bg-[#252934] pt-[2px]">
        <LeftToolbar />
        <div className="ml-[2px] mr-[3px] flex w-[1253px] shrink-0 flex-col">
          <div className="relative flex h-[601px] shrink-0 bg-[#11151f]">
            <Chart />
            <PriceAxis />
            <Legend />
            <div className="absolute left-[945px] top-[61px] flex h-[20px] w-[33px] items-center rounded-[2px] bg-[#1e222d] text-[#b2b5be]">
              <Cell className="w-[13px] border-r border-[#2a2e39]"><Dots /></Cell>
              <Cell className="w-[19px]"><Ico><path d="M8 8h5v5H8zM15.500 8h5v5h-5zM8 15.500h5v5H8zM18 15.500v5.500M15.500 18h5.500" /></Ico></Cell>
            </div>
          </div>
          <TimeAxis />
          <RangeBar />
          <div className="h-[2px] shrink-0" />
          <PanelTabs />
        </div>
        <RightBar />
        <div className="absolute left-0 top-[432px] flex h-[20px] w-[93px] items-center rounded-[2px] bg-[#1e222d] text-[#b2b5be]">
          <Cell className="w-[13px]"><Dots /></Cell>
          <Cell className="w-[20px]"><Ico><path d="M7.500 7.500h13M7.500 14h12M7.500 20.500h15" /><path d="M8 13l12-5" strokeDasharray="1.500 1.500" /><circle cx="6" cy="7.500" r="1.600" /><circle cx="6" cy="14" r="1.600" /><circle cx="6" cy="20.500" r="1.600" /><circle cx="21.500" cy="14" r="1.600" /></Ico></Cell>
          <Cell className="w-[20px]"><Ico>{fibTool}</Ico></Cell>
          <Cell className="w-[20px]"><Ico><path d="M5 20l4-7 4 4 5-6 4 6" /><circle cx="5" cy="21" r="1.400" /><circle cx="13" cy="18" r="1.400" /><circle cx="22.500" cy="18" r="1.400" /><path d="M8.500 9l2-5 2 5M9 7.500h3M22.500 5c-3-2-4 4 0 3" /></Ico></Cell>
          <Cell className="w-[20px]"><Ico>{crossTool}</Ico></Cell>
        </div>
      </div>
      <Taskbar />
    </div>
  );
}
